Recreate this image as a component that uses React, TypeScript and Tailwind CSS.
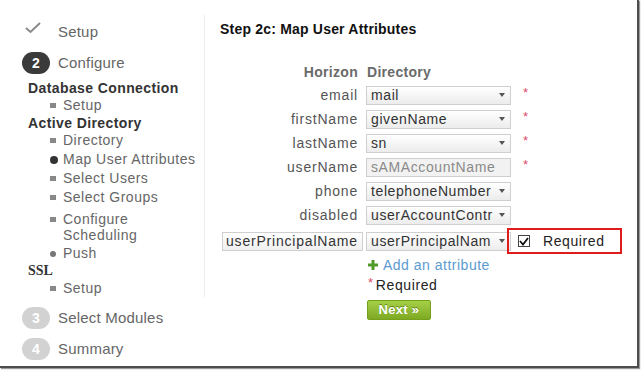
import React from 'react';

type Sub = { label: string; bullet: 'square' | 'dot' | 'current'; lines?: string[] };

const adSubs: Sub[] = [
    { label: 'Directory', bullet: 'square' },
    { label: 'Map User Attributes', bullet: 'current' },
    { label: 'Select Users', bullet: 'square' },
    { label: 'Select Groups', bullet: 'square' },
    { label: 'Configure', bullet: 'square', lines: ['Configure', 'Scheduling'] },
    { label: 'Push', bullet: 'dot' },
];

// the select boxes are narrow, so long attribute names show cut short
const rows = [
    { name: 'email', value: 'mail', required: true },
    { name: 'firstName', value: 'givenName', required: true },
    { name: 'lastName', value: 'sn', required: true },
    { name: 'userName', value: 'sAMAccountName', required: true, locked: true },
    { name: 'phone', value: 'telephoneNumber', required: false },
    { name: 'disabled', value: 'userAccountContr', required: false },
];

const Bullet: React.FC<{ kind: Sub['bullet'] }> = ({ kind }) => {
    if (kind === 'current') {
        return <span className="block w-[8px] h-[8px] rounded-full bg-[#333]" />;
    }
    if (kind === 'dot') {
        return <span className="block w-[6px] h-[6px] rounded-full bg-[#777]" />;
    }
    return <span className="block w-[6px] h-[5px] bg-[#888]" />;
};

const SubItem: React.FC<{ sub: Sub }> = ({ sub }) => {
    if (sub.lines) {
        return (
            <div className="flex pl-[50px] pt-[4px] h-[37px]">
                <div className="w-[13px] h-[16px] flex items-center">
                    <Bullet kind={sub.bullet} />
                </div>
                <div className="leading-[16px]">
                    {sub.lines.map(l => <div key={l}>{l}</div>)}
                </div>
            </div>
        );
    }
    return (
        <div className="flex items-center pl-[50px] h-[19px]">
            <div className="w-[13px] flex items-center">
                <Bullet kind={sub.bullet} />
            </div>
            <span>{sub.label}</span>
        </div>
    );
};

const Select: React.FC<{ value: string; locked?: boolean }> = ({ value, locked }) => (
    <div
        className={`w-[145px] h-[19px] border border-[#cfcfcf] flex items-center pl-[4px] pr-[5px] ${
            locked ? 'bg-[#f2f2f2] text-[#8a8a8a]' : 'bg-gradient-to-b from-[#ffffff] to-[#ececec] text-[#333]'
        }`}
    >
        <span className="flex-1 whitespace-nowrap leading-[17px] tracking-[0.6px]">{value}</span>
        {!locked && (
            <span className="ml-[2px] w-0 h-0 border-l-[3px] border-r-[3px] border-t-[4px] border-l-transparent border-r-transparent border-t-[#555]" />
        )}
    </div>
);

const Asterisk: React.FC = () => (
    <span className="ml-[12px] text-[#de4a6a] text-[13px] leading-none -mt-[6px]">*</span>
);

export default function App() {
    return (
        <div className="w-[642px] h-[371px] bg-white font-['Liberation_Sans',Arial,sans-serif]">
            <div className="w-[639px] h-[368px] bg-white border-r-[2px] border-b-[2px] border-[#4d4d4d] shadow-[1px_1px_1px_#9a9a9a] flex">
                {/* wizard steps */}
                <div className="w-[205px] shrink-0 flex flex-col text-[#666]">
                    <div className="mt-[15px] pt-[7px] h-[282px] border-r border-[#ececec]">
                        <div className="flex items-center h-[20px] text-[15px] tracking-[0.2px]">
                            <svg className="ml-[25px] -mt-[8px]" width="16" height="12" viewBox="0 0 16 12">
                                <polyline points="1,6 5.5,10 15,1" fill="none" stroke="#8a8a8a" strokeWidth="2" />
                            </svg>
                            <span className="ml-[17px]">Setup</span>
                        </div>
                        <div className="flex items-center h-[22px] mt-[10px] text-[15px] tracking-[0.2px]">
                            <span className="ml-[22px] w-[28px] h-[22px] rounded-full bg-[#3a3a3a] text-white font-bold text-[14px] flex items-center justify-center">2</span>
                            <span className="ml-[8px]">Configure</span>
                        </div>
                        <div className="mt-[6px] pl-[28px] h-[16px] leading-[16px] text-[14px] font-bold text-[#333] tracking-[0.4px]">Database Connection</div>
                        <div className="text-[14px] tracking-[0.5px]">
                            <div className="flex items-center pl-[50px] h-[18px]">
                                <div className="w-[13px] flex items-center"><Bullet kind="square" /></div>
                                <span>Setup</span>
                            </div>
                        </div>
                        <div className="mt-[1px] pl-[28px] h-[16px] leading-[16px] text-[14px] font-bold text-[#333] tracking-[0.4px]">Active Directory</div>
                        <div className="text-[14px] tracking-[0.5px]">
                            {adSubs.map(s => <SubItem key={s.label} sub={s} />)}
                        </div>
                        <div className="pl-[28px] h-[16px] leading-[16px] text-[14px] font-bold text-[#333] font-['Liberation_Serif',serif]">SSL</div>
                        <div className="text-[14px] tracking-[0.5px]">
                            <div className="flex items-center pl-[50px] h-[18px]">
                                <div className="w-[13px] flex items-center"><Bullet kind="square" /></div>
                                <span>Setup</span>
                            </div>
                        </div>
                    </div>
                    <div className="flex items-center h-[22px] mt-[10px] text-[15px] tracking-[0.2px]">
                        <span className="ml-[22px] w-[28px] h-[22px] rounded-full bg-[#d2d2d2] text-white font-bold text-[14px] flex items-center justify-center">3</span>
                        <span className="ml-[8px]">Select Modules</span>
                    </div>
                    <div className="flex items-center h-[22px] mt-[9px] text-[15px] tracking-[0.2px]">
                        <span className="ml-[22px] w-[28px] h-[22px] rounded-full bg-[#d2d2d2] text-white font-bold text-[14px] flex items-center justify-center">4</span>
                        <span className="ml-[8px]">Summary</span>
                    </div>
                </div>

                {/* map attributes form */}
                <div className="flex-1 pl-[15px] pt-[21px] text-[14px] tracking-[0.8px]">
                    <h2 className="h-[16px] leading-[16px] font-bold text-[#111] tracking-[0.2px]">Step 2c: Map User Attributes</h2>

                    <div className="mt-[27px] ml-[2px] flex h-[16px] leading-[16px] font-bold text-[#6a6a6a] tracking-[0.3px]">
                        <div className="w-[141px] text-right pr-[5px]">Horizon</div>
                        <div className="ml-[4px]">Directory</div>
                    </div>

                    <div className="mt-[3px] ml-[2px]">
                        {rows.map(r => (
                            <div key={r.name} className="flex items-center h-[24px]">
                                <div className="w-[141px] text-right pr-[5px] text-[#555]">{r.name}</div>
                                <div className="ml-[3px]"><Select value={r.value} locked={r.locked} /></div>
                                {r.required && <Asterisk />}
                            </div>
                        ))}
                        <div className="flex items-center h-[26px] mt-[1px]">
                            <div className="w-[141px] h-[19px] border border-[#cfcfcf] bg-gradient-to-b from-[#ffffff] to-[#f0f0f0] pl-[3px] leading-[17px] text-[#333] whitespace-nowrap">userPrincipalName</div>
                            <div className="ml-[3px]"><Select value="userPrincipalNam" /></div>
                            <div className="-ml-[4px] w-[115px] h-[26px] border-2 border-[#e01b1b] flex items-center pl-[9px]">
                                <span className="w-[12px] h-[12px] border border-[#444] bg-white flex items-center justify-center">
                                    <svg width="10" height="9" viewBox="0 0 10 9">
                                        <polyline points="1,4 4,7.5 9,1" fill="none" stroke="#111" strokeWidth="1.8" />
                                    </svg>
                                </span>
                                <span className="ml-[13px] text-[#222] tracking-[0.6px]">Required</span>
                            </div>
                        </div>
                    </div>

                    <div className="mt-[2px] ml-[148px] flex items-center h-[18px]">
                        <svg width="10" height="10" viewBox="0 0 10 10">
                            <path d="M3.5 0h3v3.5H10v3H6.5V10h-3V6.5H0v-3h3.5z" fill="#4f9a2b" />
                        </svg>
                        <span className="ml-[5px] text-[#5b9bd1] tracking-[0.5px]">Add an attribute</span>
                    </div>
                    <div className="mt-[2px] ml-[148px] flex items-center h-[18px]">
                        <span className="text-[#de4a6a] text-[13px] leading-none -mt-[5px]">*</span>
                        <span className="ml-[2px] text-[#222] tracking-[0.6px]">Required</span>
                    </div>
                    <button className="mt-[6px] ml-[147px] w-[64px] h-[20px] rounded-[2px] border border-[#74a01c] bg-gradient-to-b from-[#a5cf45] to-[#7ea923] text-white font-bold text-[13px] leading-[18px] tracking-[0.3px] [text-shadow:0_-1px_0_#5f851a]">
                        Next »
                    </button>
                </div>
            </div>
        </div>
    );
}
